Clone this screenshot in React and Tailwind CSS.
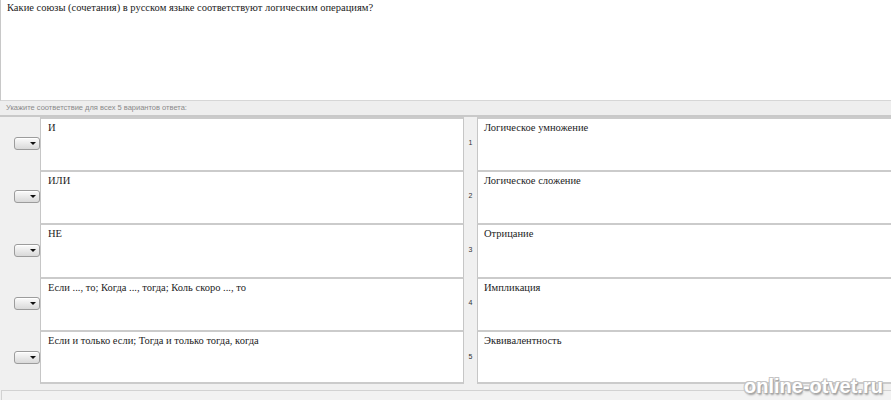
import React from "react";

const rows = [
  { left: "И", right: "Логическое умножение", n: 1, h: "h-[53px]" },
  { left: "ИЛИ", right: "Логическое сложение", n: 2, h: "h-[53px]" },
  { left: "НЕ", right: "Отрицание", n: 3, h: "h-[54px]" },
  { left: "Если ..., то; Когда ..., тогда; Коль скоро ..., то", right: "Импликация", n: 4, h: "h-[53px]" },
  { left: "Если и только если; Тогда и только тогда, когда", right: "Эквивалентность", n: 5, h: "h-[54px]" },
];

function DropButton() {
  return (
    <div className="w-[26px] h-[13px] rounded-[3px] border border-[#9c9c9c] bg-gradient-to-b from-[#fbfbfb] to-[#d9d9d9] relative shadow-[inset_0_1px_0_#ffffff]">
      <div className="absolute right-[3px] top-[4px] w-0 h-0 border-l-[3px] border-r-[3px] border-t-[3px] border-l-transparent border-r-transparent border-t-[#111]" />
    </div>
  );
}

export default function App() {
  return (
    <div className="w-[891px] h-[400px] overflow-hidden bg-[#f0f0f0] relative font-['Liberation_Serif',serif] text-[#1c1c1c]">
      <div className="h-[101px] bg-white border-l border-[#c8c8c8] border-b border-b-[#d6d6d6] pl-[6px] pt-[1px] text-[10.5px] leading-[13px]">
        Какие союзы (сочетания) в русском языке соответствуют логическим операциям?
      </div>
      <div className="h-[16px] border-b-2 border-[#c9c9c9] bg-[#eeeeee] pl-[6px] flex items-center font-['Liberation_Sans',sans-serif] text-[7.5px] text-[#8a8a8a]">
        Укажите соответствие для всех 5 вариантов ответа:
      </div>
      <div className="flex flex-col">
        {rows.map((r, i) => (
          <div key={r.n} className={`flex ${r.h}`}>
            <div className="w-[40px] shrink-0 flex items-center justify-end">
              <DropButton />
            </div>
            <div className={`w-[424px] shrink-0 bg-white border-l border-r border-[#c6c6c6] border-t-2 border-t-[#cbcbcb] ${i === rows.length - 1 ? "border-b-2 border-b-[#cbcbcb]" : ""} pl-[7px] pt-[2px] text-[10.5px] leading-[13px]`}>
              {r.left}
            </div>
            <div className="w-[13px] shrink-0 flex items-center justify-center font-['Liberation_Sans',sans-serif] text-[7px] text-[#333]">
              {r.n}
            </div>
            <div className={`flex-1 bg-white border-l border-[#c6c6c6] border-t-2 border-t-[#cbcbcb] ${i === rows.length - 1 ? "border-b-2 border-b-[#cbcbcb]" : ""} pl-[6px] pt-[2px] text-[10.5px] leading-[13px]`}>
              {r.right}
            </div>
          </div>
        ))}
      </div>
      <div className="pt-[6px] h-[20px]">
        <div className="h-full ml-[1px] border-t border-l border-[#d2d2d2] bg-[#f2f2f2]" />
      </div>
      <div className="absolute left-[744px] top-[376px] font-['Liberation_Sans',sans-serif] font-bold text-[20px] leading-none text-white [text-shadow:1px_1px_0_#a8a8a8,-1px_-1px_0_#c4c4c4,1px_-1px_0_#c4c4c4,-1px_1px_0_#c4c4c4,1px_2px_2px_#9a9a9a]">
        online-otvet.ru
      </div>
    </div>
  );
}
